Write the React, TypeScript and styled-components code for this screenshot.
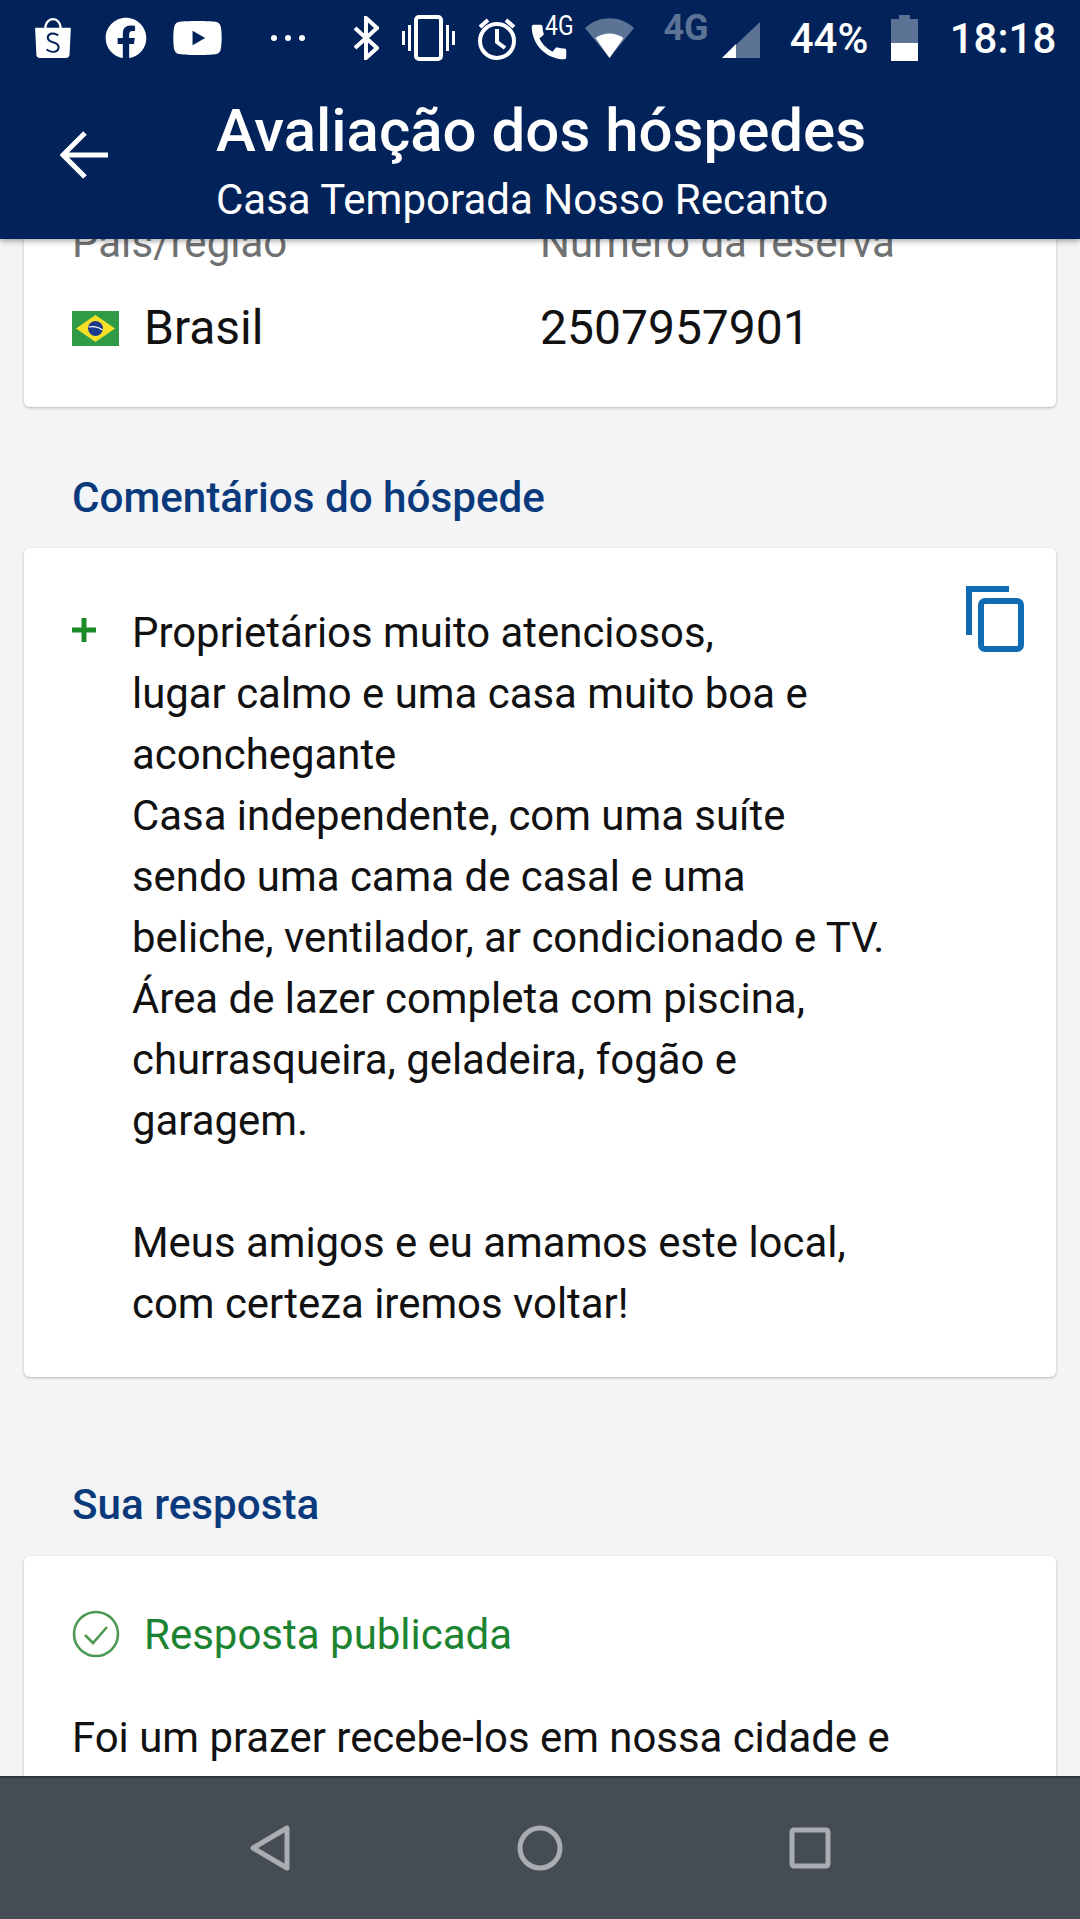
import styled, { createGlobalStyle } from 'styled-components'
import { FaFacebook, FaYoutube } from 'react-icons/fa'
import { SiShopee } from 'react-icons/si'
import { MdCall } from 'react-icons/md'

const GlobalStyle = createGlobalStyle`
  html, body {
    margin: 0;
    padding: 0;
    background: #f3f4f5;
  }
  * {
    box-sizing: border-box;
  }
`

const Page = styled.div`
  display: flex;
  flex-direction: column;
  width: 1080px;
  height: 1919px;
  overflow: hidden;
  font-family: Roboto, 'Liberation Sans', sans-serif;
  background: #f3f4f5;
`

const Header = styled.header`
  position: relative;
  z-index: 2;
  flex: none;
  height: 239px;
  background: #02225a;
  color: #fff;
  box-shadow: 0 2px 6px rgba(0, 0, 0, 0.35);
`

const StatusBar = styled.div`
  display: flex;
  align-items: center;
  height: 76px;
  padding-left: 33px;
`

const StatusItem = styled.span<{ $gap: number; $w: number; $dim?: boolean; $drop?: number }>`
  display: flex;
  flex: none;
  align-items: center;
  justify-content: center;
  margin-left: ${(p) => p.$gap}px;
  padding-top: ${(p) => p.$drop ?? 0}px;
  width: ${(p) => p.$w}px;
  color: ${(p) => (p.$dim ? '#5d7396' : '#fff')};
`

const StatusText = styled(StatusItem)`
  font-size: 42px;
  font-weight: 500;
  white-space: nowrap;
`

const CallIcon = styled.span`
  position: relative;
  display: block;
  width: 42px;
  height: 44px;
  line-height: 0;

  svg {
    position: absolute;
    left: -6px;
    bottom: -5px;
  }
`

const CallBadge = styled.span`
  position: absolute;
  right: 0;
  top: -3px;
  font-size: 27px;
  line-height: 26px;
  transform: scaleX(0.85);
  transform-origin: right center;
  background: #02225a;
  padding-left: 1px;
`

const DimNetwork = styled(StatusItem)`
  font-size: 36px;
  font-weight: 700;
  position: relative;
  top: -10px;
`

const TitleRow = styled.div`
  display: flex;
  align-items: flex-start;
`

const BackButton = styled.div`
  flex: none;
  width: 216px;
  padding: 55px 0 0 60px;
`

const Titles = styled.div`
  display: flex;
  flex-direction: column;
  padding-top: 17px;
`

const Title = styled.h1`
  margin: 0;
  font-size: 60px;
  line-height: 76px;
  font-weight: 500;
  white-space: nowrap;
`

const Subtitle = styled.div`
  font-size: 42px;
  line-height: 54px;
  margin-top: 4px;
  white-space: nowrap;
`

const Content = styled.main`
  flex: 1;
  min-height: 0;
  overflow: hidden;
  padding: 0 24px;
`

const Card = styled.section`
  background: #fff;
  border-radius: 6px;
  box-shadow: 0 1px 3px rgba(0, 0, 0, 0.25);
`

const BookingCard = styled(Card)`
  display: grid;
  grid-template-columns: 468px 1fr;
  margin-top: -91px;
  padding: 70px 48px 47px;
  row-gap: 28px;
`

const Label = styled.div`
  font-size: 42px;
  line-height: 50px;
  color: #6f7172;
`

const Value = styled.div`
  display: flex;
  align-items: center;
  gap: 25px;
  font-size: 48px;
  line-height: 64px;
  color: #111;
`

const SectionTitle = styled.h2`
  margin: 0;
  padding-left: 48px;
  font-size: 42.2px;
  line-height: 50px;
  font-weight: 500;
  color: #0b3a7c;
`

const CommentsTitle = styled(SectionTitle)`
  margin: 66px 0 25px;
`

const ReplyTitle = styled(SectionTitle)`
  margin: 103px 0 26px;
`

const CommentCard = styled(Card)`
  display: flex;
  align-items: flex-start;
  padding: 54px 32px 43px 48px;
`

const Plus = styled.div`
  flex: none;
  width: 60px;
  padding-top: 16px;
`

const CommentText = styled.p`
  flex: 1;
  margin: 0;
  font-size: 41.9px;
  line-height: 61px;
  color: #111;
  white-space: pre-line;
`

const CopyButton = styled.div`
  flex: none;
  margin-top: -16px;
  line-height: 0;
`

const ReplyCard = styled(Card)`
  padding: 50px 48px 60px;
`

const PublishedRow = styled.div`
  display: flex;
  align-items: center;
  gap: 24px;
  height: 56px;
  font-size: 42px;
  color: #1c8431;
`

const ReplyText = styled.p`
  margin: 45px 0 0;
  font-size: 41.9px;
  line-height: 61px;
  color: #111;
`

const NavBar = styled.nav`
  position: relative;
  z-index: 2;
  flex: none;
  display: flex;
  align-items: center;
  justify-content: center;
  gap: 226px;
  height: 143px;
  padding-bottom: 2px;
  background: #454c53;
  border-top: 2px solid #2f353a;
`

const comment = `Proprietários muito atenciosos,
lugar calmo e uma casa muito boa e
aconchegante
Casa independente, com uma suíte
sendo uma cama de casal e uma
beliche, ventilador, ar condicionado e TV.
Área de lazer completa com piscina,
churrasqueira, geladeira, fogão e
garagem.

Meus amigos e eu amamos este local,
com certeza iremos voltar!`

const BluetoothIcon = () => (
  <svg width="26" height="44" viewBox="0 0 26 44" fill="none" stroke="#fff" strokeWidth="4">
    <path d="M2 12 24 32 13 42V2l11 10L2 32" />
  </svg>
)

const VibrateIcon = () => (
  <svg width="53" height="46" viewBox="0 0 53 46" fill="none" stroke="#fff">
    <rect x="14" y="2" width="25" height="42" rx="3" strokeWidth="4" />
    <path d="M7.5 10v26M45.5 10v26" strokeWidth="3" />
    <path d="M1.5 16v14M51.5 16v14" strokeWidth="3" />
  </svg>
)

const AlarmIcon = () => (
  <svg width="40" height="44" viewBox="0 0 40 44" fill="none" stroke="#fff" strokeWidth="4">
    <circle cx="20" cy="25" r="17" />
    <path d="M20 13v13l8 6" />
    <path d="M3 11l8-7M37 11l-8-7" />
  </svg>
)

const WifiIcon = () => (
  <svg width="51" height="44" viewBox="0 0 51 44">
    <path d="M25.5 42 1 12C15 -1 36 -1 50 12Z" fill="#5d7396" />
    <path d="M25.5 42 11.5 22C19.5 16 31.5 16 39.5 22Z" fill="#fff" />
  </svg>
)

const SignalIcon = () => (
  <svg width="38" height="36" viewBox="0 0 38 36">
    <path d="M38 0V36H0Z" fill="#5d7396" />
    <path d="M14 22V36H0Z" fill="#fff" />
  </svg>
)

const BatteryIcon = () => (
  <svg width="27" height="46" viewBox="0 0 27 46">
    <path d="M8 0h11v4h8v25H0V4h8Z" fill="#5d7396" />
    <rect y="28" width="27" height="18" fill="#fff" />
  </svg>
)

const DotsIcon = () => (
  <svg width="36" height="8" viewBox="0 0 36 8" fill="#fff">
    <circle cx="4" cy="4" r="3" />
    <circle cx="18" cy="4" r="3" />
    <circle cx="32" cy="4" r="3" />
  </svg>
)

const BackArrow = () => (
  <svg width="48" height="48" viewBox="0 0 48 48" fill="none" stroke="#fff" strokeWidth="5">
    <path d="M48 24H3M25 2 3 24l22 22" />
  </svg>
)

const BrazilFlag = () => (
  <svg width="47" height="35" viewBox="0 0 47 35">
    <rect width="47" height="35" fill="#2f9b46" />
    <path d="M23.5 4 43 17.5 23.5 31 4 17.5Z" fill="#f5df27" />
    <circle cx="23.5" cy="17.5" r="7.5" fill="#1c3a8c" />
    <path d="M16.5 16c5-1 10 0 14 3" stroke="#fff" strokeWidth="1.2" fill="none" />
  </svg>
)

const CopyIcon = () => (
  <svg width="58" height="66" viewBox="0 0 58 66" fill="none" stroke="#0f6cb4" strokeWidth="6">
    <path d="M43 3H3v46" />
    <rect x="15" y="15" width="40" height="48" rx="4" />
  </svg>
)

const PlusIcon = () => (
  <svg width="24" height="24" viewBox="0 0 24 24" fill="none" stroke="#1c8a25" strokeWidth="5">
    <path d="M12 0v24M0 12h24" />
  </svg>
)

const CheckCircle = () => (
  <svg width="48" height="48" viewBox="0 0 48 48" fill="none" stroke="#4d9a55" strokeWidth="2.6">
    <circle cx="24" cy="24" r="22" />
    <path d="M13 25l8 8 14-16" />
  </svg>
)

const NavBack = () => (
  <svg width="42" height="48" viewBox="0 0 42 48" fill="none" stroke="#a8adb2" strokeWidth="5" strokeLinejoin="round">
    <path d="M38 4v40L4 24Z" />
  </svg>
)

const NavHome = () => (
  <svg width="46" height="46" viewBox="0 0 46 46" fill="none" stroke="#a8adb2" strokeWidth="5">
    <circle cx="23" cy="23" r="20" />
  </svg>
)

const NavRecent = () => (
  <svg width="42" height="42" viewBox="0 0 42 42" fill="none" stroke="#a8adb2" strokeWidth="5" strokeLinejoin="round">
    <rect x="3" y="3" width="36" height="36" rx="2" />
  </svg>
)

const App = () => {
  return (
    <Page>
      <GlobalStyle />
      <Header>
        <StatusBar>
          <StatusItem $gap={0} $w={40}>
            <SiShopee size={48} />
          </StatusItem>
          <StatusItem $gap={32} $w={42}>
            <FaFacebook size={42} />
          </StatusItem>
          <StatusItem $gap={25} $w={51}>
            <FaYoutube size={58} />
          </StatusItem>
          <StatusItem $gap={47} $w={36}>
            <DotsIcon />
          </StatusItem>
          <StatusItem $gap={47} $w={26}>
            <BluetoothIcon />
          </StatusItem>
          <StatusItem $gap={23} $w={53}>
            <VibrateIcon />
          </StatusItem>
          <StatusItem $gap={22} $w={40}>
            <AlarmIcon />
          </StatusItem>
          <StatusItem $gap={15} $w={42}>
            <CallIcon>
              <MdCall size={46} />
              <CallBadge>4G</CallBadge>
            </CallIcon>
          </StatusItem>
          <StatusItem $gap={10} $w={51}>
            <WifiIcon />
          </StatusItem>
          <DimNetwork $gap={29} $w={44} $dim>
            4G
          </DimNetwork>
          <StatusItem $gap={14} $w={38} $drop={4}>
            <SignalIcon />
          </StatusItem>
          <StatusText $gap={31} $w={76}>
            44%
          </StatusText>
          <StatusItem $gap={24} $w={27}>
            <BatteryIcon />
          </StatusItem>
          <StatusText $gap={33} $w={104}>
            18:18
          </StatusText>
        </StatusBar>
        <TitleRow>
          <BackButton>
            <BackArrow />
          </BackButton>
          <Titles>
            <Title>Avaliação dos hóspedes</Title>
            <Subtitle>Casa Temporada Nosso Recanto</Subtitle>
          </Titles>
        </TitleRow>
      </Header>

      <Content>
        <BookingCard>
          <Label>País/região</Label>
          <Label>Número da reserva</Label>
          <Value>
            <BrazilFlag />
            Brasil
          </Value>
          <Value>2507957901</Value>
        </BookingCard>

        <CommentsTitle>Comentários do hóspede</CommentsTitle>
        <CommentCard>
          <Plus>
            <PlusIcon />
          </Plus>
          <CommentText>{comment}</CommentText>
          <CopyButton>
            <CopyIcon />
          </CopyButton>
        </CommentCard>

        <ReplyTitle>Sua resposta</ReplyTitle>
        <ReplyCard>
          <PublishedRow>
            <CheckCircle />
            Resposta publicada
          </PublishedRow>
          <ReplyText>Foi um prazer recebe-los em nossa cidade e</ReplyText>
        </ReplyCard>
      </Content>

      <NavBar>
        <NavBack />
        <NavHome />
        <NavRecent />
      </NavBar>
    </Page>
  )
}

export default App
